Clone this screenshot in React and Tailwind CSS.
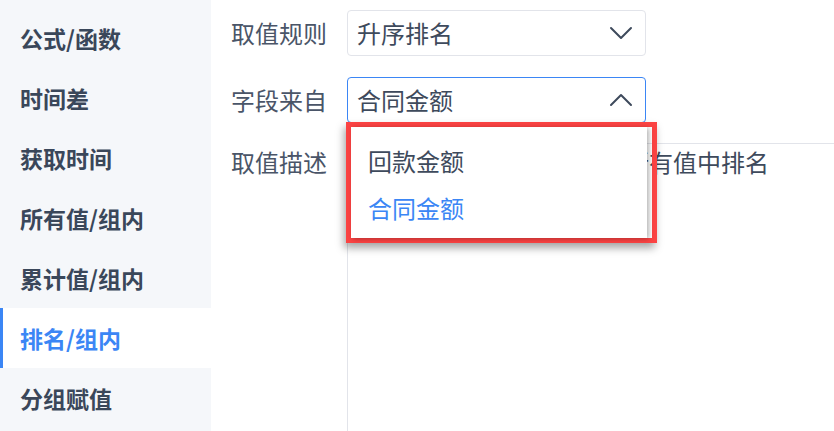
import { useState } from 'react';

const menu = ['公式/函数', '时间差', '获取时间', '所有值/组内', '累计值/组内', '排名/组内', '分组赋值'];

const Chevron = ({ up }) => (
  <svg width="24" height="14" viewBox="0 0 24 14" fill="none" stroke="#3e4a5c" strokeWidth="2" strokeLinecap="round" strokeLinejoin="round">
    {up ? <polyline points="2,12 12,2 22,12" /> : <polyline points="2,2 12,12 22,2" />}
  </svg>
);

const App = () => {
  const [active] = useState(5);

  return (
    <div className="flex w-[834px] h-[431px] overflow-hidden bg-white font-['Noto_Sans_CJK_SC',sans-serif] text-[#3e4a5c]">
      {/* left menu */}
      <div className="w-[211px] shrink-0 bg-[#f5f7fa] pt-[8px]">
        {menu.map((item, i) => (
          <div
            key={item}
            className={
              i === active
                ? 'h-[60px] flex items-center pl-[17px] bg-white border-l-[3px] border-[#3b86f5] text-[23px] font-bold text-[#3b86f5]'
                : 'h-[60px] flex items-center pl-5 text-[23px] font-bold text-[#3a475a]'
            }
          >
            {item}
          </div>
        ))}
      </div>

      {/* form */}
      <div className="relative flex-1 pl-5 pt-[10px]">
        <div className="flex items-center h-[46px]">
          <div className="w-[116px] text-[24px] text-[#4a5568]">取值规则</div>
          <div className="w-[299px] h-[46px] flex items-center justify-between pl-[9px] pr-[12px] border border-[#e2e4ea] rounded-[4px]">
            <span className="text-[24px]">升序排名</span>
            <Chevron />
          </div>
        </div>

        <div className="flex items-center h-[46px] mt-[21px]">
          <div className="w-[116px] text-[24px] text-[#4a5568]">字段来自</div>
          <div className="w-[299px] h-[46px] flex items-center justify-between pl-[9px] pr-[12px] border border-[#3b86f5] rounded-[4px]">
            <span className="text-[24px]">合同金额</span>
            <Chevron up />
          </div>
        </div>

        <div className="flex mt-[20px]">
          <div className="w-[116px] text-[24px] text-[#4a5568] pt-[1px]">取值描述</div>
          <div className="flex-1 h-[300px] border-t border-l border-[#e2e4ea] pl-[13px] whitespace-nowrap text-[24px]">
            根据合同金额的值升序在所有值中排名
          </div>
        </div>

        {/* dropdown, with the red annotation frame round it */}
        <div className="absolute left-[135px] top-[122px] w-[311px] h-[121px] border-[5px] border-[#fb4343] shadow-[-2px_5px_8px_rgba(0,0,0,0.35)]">
          <div className="w-[296px] h-full bg-white shadow-[2px_1px_5px_rgba(0,0,0,0.3)] pl-[17px] pt-[17px]">
            <div className="h-[47px] text-[24px] leading-[34px] text-[#3e4a5c]">回款金额</div>
            <div className="h-[47px] text-[24px] leading-[34px] text-[#3b86f5]">合同金额</div>
          </div>
        </div>
      </div>
    </div>
  );
};

export default App;
